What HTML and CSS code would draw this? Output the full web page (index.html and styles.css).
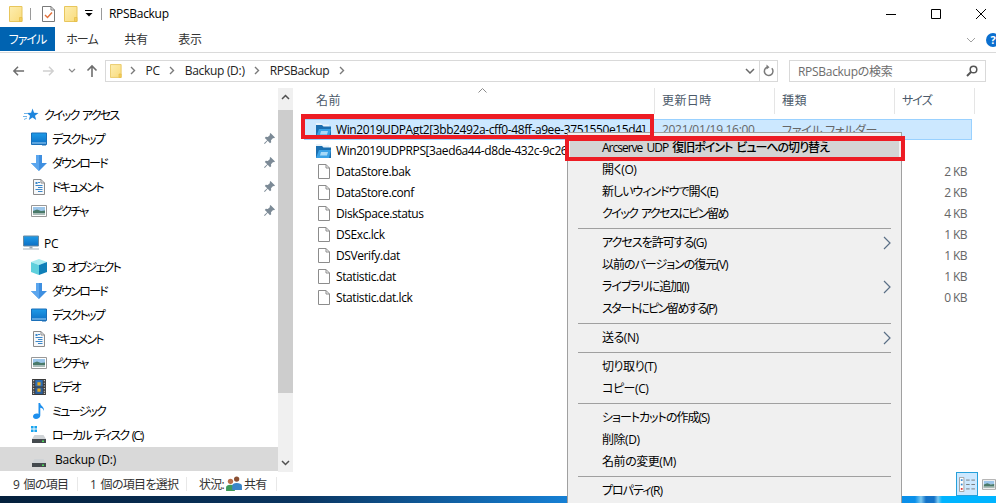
FILE: index.html
```html
<!DOCTYPE html>
<html lang="ja">
<head>
<meta charset="utf-8">
<title>RPSBackup</title>
<link rel="stylesheet" href="styles.css">
</head>
<body>
<svg class="defs" width="0" height="0" aria-hidden="true">
  <defs>
    <linearGradient id="gy" x1="0" y1="0" x2="1" y2="1"><stop offset="0" stop-color="#fdeeb0"/><stop offset="1" stop-color="#f9db7c"/></linearGradient>
    <linearGradient id="gb" x1="0" y1="0" x2="0" y2="1"><stop offset="0" stop-color="#1e9be8"/><stop offset="1" stop-color="#0d6fc4"/></linearGradient>
    <symbol id="folder" viewBox="0 0 14 16"><path d="M.5.5h12.500v15H.5z" fill="url(#gy)" stroke="#e8c65c"/><path d="M10.500 11.500H13v4h-2.500z" fill="#f4cf5e" stroke="#e3bb45" stroke-width=".7"/></symbol>
    <symbol id="check" viewBox="0 0 13 16"><path d="M.5.500h8.500l3.500 3.500v11.500H.5z" fill="#fff" stroke="#7a7a7a"/><path d="M9 .5V4h3.500" fill="none" stroke="#7a7a7a"/><path d="M3 9l2.500 2.500L10 6.500" fill="none" stroke="#e2703a" stroke-width="1.400"/></symbol>
    <symbol id="star" viewBox="0 0 16 16"><path d="M9.500 1.500l1.600 4.300 4.400.2-3.500 2.700 1.200 4.300-3.700-2.500L5.800 13l1.200-4.300L3.800 6l4.300-.200z" fill="#1f86dd"/><path d="M1 6.500h3M0 9.500h4M1 12.500l3-1.500" stroke="#6eb3e8" fill="none"/></symbol>
    <symbol id="desk" viewBox="0 0 16 13"><path d="M.5.500h15v11.500H.5z" fill="url(#gb)" stroke="#1a6fb8"/><path d="M1 10.500h14" stroke="#a8d4f4"/><path d="M11 12.500h4" stroke="#1a6fb8"/></symbol>
    <symbol id="dl" viewBox="0 0 16 16"><path d="M5 0h6v8h5l-8 8-8-8h5z" fill="#3f8fe0"/><path d="M5 0h3v16l-8-8h5z" fill="#5ba6ee"/></symbol>
    <symbol id="doc" viewBox="0 0 12 16"><path d="M.5.500h7.500l3.500 3.500v11.500H.5z" fill="#f6f8fa" stroke="#8b8b8b"/><path d="M8 .5V4h3.500" fill="none" stroke="#8b8b8b"/><path d="M5 3.500h2M2.500 6.500h7M5 8.500h4.500M2.500 10.500h7M5 12.500h4.500" stroke="#3b87c9"/><path d="M2.500 3h2v2h-2z" fill="#3b87c9"/></symbol>
    <symbol id="pic" viewBox="0 0 16 12"><path d="M.5.500h15v11H.5z" fill="#fff" stroke="#989898"/><path d="M2 2h12v4H2z" fill="#9cc6ea"/><path d="M2 6l4-1.500 4 1.500 4-.500V10H2z" fill="#4a7a6a"/><path d="M2 8h12v2H2z" fill="#a9bcb8"/></symbol>
    <symbol id="pc" viewBox="0 0 16 15"><path d="M.5.500h15v10H.5z" fill="url(#gb)" stroke="#6a8aa0"/><path d="M6.500 11h3v2h-3z" fill="#9aa8b2"/><path d="M0 13.500h16" stroke="#a8b4bc"/></symbol>
    <symbol id="cube" viewBox="0 0 16 16"><path d="M8 0l8 3-8 3-8-3z" fill="#a8ecf0"/><path d="M0 3l8 3v10l-8-3z" fill="#5fd0dc"/><path d="M16 3L8 6v10l8-3z" fill="#0f7fb8"/></symbol>
    <symbol id="film" viewBox="0 0 13 15"><path d="M0 0h13v15H0z" fill="#3a3a3a"/><path d="M3 1h7v6H3z" fill="#2f6fb5"/><path d="M3 8h7v6H3z" fill="#2a5f9e"/><path d="M5 3h3v3H5zM5 9h3v3H5z" fill="#e4a820"/><path d="M1 1.500h1M1 4h1M1 6.500h1M1 9h1M1 11.500h1M1 13.500h1M11 1.500h1M11 4h1M11 6.500h1M11 9h1M11 11.500h1M11 13.500h1" stroke="#ddd"/></symbol>
    <symbol id="music" viewBox="0 0 12 16"><path d="M5.500 0h1.600c.3 3 4.600 3.800 3.900 8-.7-2.200-2.500-3-3.700-3.200V12.500C7.300 14.700 5 16 3 16 1.300 16 0 15 0 13.600c0-1.700 1.800-3 3.700-3 .7 0 1.300.1 1.800.4z" fill="#1e90ee"/></symbol>
    <symbol id="win" viewBox="0 0 6 6"><path d="M0 0h2.600v2.600H0zM3.400 0H6v2.600H3.400zM0 3.400h2.600V6H0zM3.400 3.400H6V6H3.400z" fill="#19a4ee"/></symbol>
    <symbol id="drive" viewBox="0 0 14 8"><path d="M2.500 0h9L14 4H0z" fill="#cfd3d6"/><path d="M0 4h14v4H0z" fill="#444a4e"/><path d="M10 5.500h2v1.500h-2z" fill="#4ed65a"/></symbol>
    <symbol id="bfolder" viewBox="0 0 15 14"><path d="M0 0h5l1.500 1.500H13V4H0z" fill="#eaf3fa"/><path d="M0 2h6l1.500 1.500H15V14H0z" fill="#1b6fb0"/><path d="M3 6h12l-2 8H0z" fill="#3aa2e6"/><path d="M5 8h7l-1 3.500H4z" fill="#a6d9f7"/></symbol>
    <symbol id="file" viewBox="0 0 12 15"><path d="M.5.500h7.500l3.500 3.500v10.500H.5z" fill="#fff" stroke="#8c8c8c"/><path d="M8 .5V4h3.500" fill="none" stroke="#8c8c8c"/></symbol>
    <symbol id="pin" viewBox="0 0 11 11"><path d="M6.500 0L11 4.500l-1 .8-.9-.3L7 7.200l.2 2L6 10.200 3.700 7.800 .8 11 0 10.200 3.200 7.300.8 5l1-1.200 2 .2 2.200-2.100-.3-.9z" fill="#7c8a96"/></symbol>
    <symbol id="people" viewBox="0 0 18 17"><circle cx="5" cy="6" r="3" fill="#b9704a"/><path d="M0 17v-4c0-2 2-3 5-3s5 1 5 3v4z" fill="#3f9a5a"/><circle cx="12" cy="3.500" r="3" fill="#8a4f32"/><path d="M7 16v-5c0-2 2-3 5-3s6 1 6 3v5z" fill="#3a86c8"/></symbol>
    <symbol id="chev" viewBox="0 0 8 14"><path d="M1 1l6 6-6 6" fill="none" stroke="#5a6f86" stroke-width="1.200"/></symbol>
    <symbol id="crumb" viewBox="0 0 6 9"><path d="M1 1l3.500 3.500L1 8" fill="none" stroke="#7a7a7a" stroke-width="1.400"/></symbol>
  </defs>
</svg>

<div class="window">
  <header class="titlebar">
    <svg class="ico-title first"><use href="#folder"/></svg>
    <span class="tsep"></span>
    <svg class="ico-check"><use href="#check"/></svg>
    <svg class="ico-title"><use href="#folder"/></svg>
    <svg class="qat" viewBox="0 0 8 7"><path d="M0 .5h7.500" stroke="#000" fill="none"/><path d="M.5 3h7L4 6.500z" fill="#000"/></svg>
    <span class="tsep sep2"></span>
    <span class="title">RPSBackup</span>
    <div class="winctl">
      <svg viewBox="0 0 10 10"><path d="M0 5.500h10" stroke="#000" fill="none"/></svg>
      <svg viewBox="0 0 10 10"><path d="M.5.500h9v9h-9z" stroke="#000" fill="none"/></svg>
      <svg viewBox="0 0 10 10"><path d="M0 0l10 10M10 0L0 10" stroke="#000" fill="none"/></svg>
    </div>
  </header>

  <nav class="tabs">
    <span class="tab active kana">ファイル</span>
    <span class="tab kana">ホーム</span>
    <span class="tab">共有</span>
    <span class="tab">表示</span>
    <svg class="rib-chev" viewBox="0 0 10 6"><path d="M1 1l4 4 4-4" fill="none" stroke="#a0a0a0"/></svg>
    <span class="help">?</span>
  </nav>

  <div class="addressrow">
    <svg class="navbtn" viewBox="0 0 14 12"><path d="M13 6H2M6.500 1.500L2 6l4.500 4.500" fill="none" stroke="#6e6e6e" stroke-width="1.600"/></svg>
    <svg class="navbtn fwd" viewBox="0 0 14 12"><path d="M1 6h11M7.500 1.500L12 6l-4.500 4.500" fill="none" stroke="#d0d0d0" stroke-width="1.600"/></svg>
    <svg class="navbtn drop" viewBox="0 0 8 5"><path d="M1 1l3 3 3-3" fill="none" stroke="#8a8a8a" stroke-width="1.200"/></svg>
    <svg class="navbtn up" viewBox="0 0 12 13"><path d="M6 13V2M1.500 6.500L6 2l4.500 4.500" fill="none" stroke="#6e6e6e" stroke-width="1.600"/></svg>
    <div class="address">
      <svg class="addr-folder"><use href="#folder"/></svg>
      <svg class="crumb"><use href="#crumb"/></svg><span class="crumbtext">PC</span>
      <svg class="crumb"><use href="#crumb"/></svg><span class="crumbtext">Backup (D:)</span>
      <svg class="crumb"><use href="#crumb"/></svg><span class="crumbtext">RPSBackup</span>
      <svg class="crumb"><use href="#crumb"/></svg>
      <span class="addr-fill"></span>
      <svg class="addr-drop" viewBox="0 0 10 6"><path d="M1 1l4 4 4-4" fill="none" stroke="#6a6a6a" stroke-width="1.500"/></svg>
      <span class="addr-refresh"><svg viewBox="0 0 11 13"><path d="M8.800 4.200A4.300 4.300 0 1 1 4 3.200" fill="none" stroke="#7a7a7a" stroke-width="1.500"/><path d="M3.500 .5l3 2.700-3 2.300z" fill="#7a7a7a"/></svg></span>
    </div>
    <div class="search">
      <span>RPSBackupの検索</span>
      <svg viewBox="0 0 12 12"><circle cx="7.500" cy="4.500" r="3.300" fill="none" stroke="#555" stroke-width="1.500"/><path d="M5 7L1 11" stroke="#555" stroke-width="2"/></svg>
    </div>
  </div>

  <main class="main">
    <aside class="nav">
      <div class="tree">
        <div class="item top"><svg class="ic ic16"><use href="#star"/></svg>クイック アクセス</div>
        <div class="item"><svg class="ic ic16"><use href="#desk"/></svg>デスクトップ<svg class="pin"><use href="#pin"/></svg></div>
        <div class="item"><svg class="ic ic16"><use href="#dl"/></svg>ダウンロード<svg class="pin"><use href="#pin"/></svg></div>
        <div class="item"><svg class="ic ic16"><use href="#doc"/></svg>ドキュメント<svg class="pin"><use href="#pin"/></svg></div>
        <div class="item"><svg class="ic ic16"><use href="#pic"/></svg>ピクチャ<svg class="pin"><use href="#pin"/></svg></div>
        <div class="item top gap latin"><svg class="ic ic16"><use href="#pc"/></svg>PC</div>
        <div class="item"><svg class="ic ic16"><use href="#cube"/></svg>3D オブジェクト</div>
        <div class="item"><svg class="ic ic16"><use href="#dl"/></svg>ダウンロード</div>
        <div class="item"><svg class="ic ic16"><use href="#desk"/></svg>デスクトップ</div>
        <div class="item"><svg class="ic ic16"><use href="#doc"/></svg>ドキュメント</div>
        <div class="item"><svg class="ic ic16"><use href="#pic"/></svg>ピクチャ</div>
        <div class="item"><svg class="ic ic16"><use href="#film"/></svg>ビデオ</div>
        <div class="item"><svg class="ic ic16"><use href="#music"/></svg>ミュージック</div>
        <div class="item"><span class="ic drivewin"><svg class="w"><use href="#win"/></svg><svg class="d"><use href="#drive"/></svg></span>ローカル ディスク (C:)</div>
        <div class="item current latin"><span class="ic drivewin"><svg class="d"><use href="#drive"/></svg></span>Backup (D:)</div>
      </div>
      <div class="scrollbar">
        <svg class="sb-arrow" viewBox="0 0 9 6"><path d="M1 5l3.500-3.500L8 5" fill="none" stroke="#505050" stroke-width="1.500"/></svg>
        <span class="thumb"></span>
        <span class="sb-fill"></span>
        <svg class="sb-arrow" viewBox="0 0 9 6"><path d="M1 1l3.500 3.500L8 1" fill="none" stroke="#505050" stroke-width="1.500"/></svg>
      </div>
    </aside>

    <section class="files">
      <div class="head">
        <span class="hcell name">名前</span>
        <span class="hcell">更新日時</span>
        <span class="hcell">種類</span>
        <span class="hcell kana">サイズ</span>
        <svg class="sort" viewBox="0 0 9 5"><path d="M.5 4.500L4.500.5l4 4" fill="none" stroke="#8a8a8a"/></svg>
      </div>
      <div class="row selected"><span class="n"><svg class="fi bf"><use href="#bfolder"/></svg>Win2019UDPAgt2[3bb2492a-cff0-48ff-a9ee-3751550e15d4]</span><span class="d">2021/01/19 16:00</span><span class="t">ファイル フォルダー</span><span class="s"></span></div>
      <div class="row"><span class="n"><svg class="fi bf"><use href="#bfolder"/></svg>Win2019UDPRPS[3aed6a44-d8de-432c-9c26-000000000000]</span><span class="d"></span><span class="t"></span><span class="s"></span></div>
      <div class="row"><span class="n"><svg class="fi"><use href="#file"/></svg>DataStore.bak</span><span class="d"></span><span class="t"></span><span class="s">2 KB</span></div>
      <div class="row"><span class="n"><svg class="fi"><use href="#file"/></svg>DataStore.conf</span><span class="d"></span><span class="t"></span><span class="s">2 KB</span></div>
      <div class="row"><span class="n"><svg class="fi"><use href="#file"/></svg>DiskSpace.status</span><span class="d"></span><span class="t"></span><span class="s">4 KB</span></div>
      <div class="row"><span class="n"><svg class="fi"><use href="#file"/></svg>DSExc.lck</span><span class="d"></span><span class="t"></span><span class="s">1 KB</span></div>
      <div class="row"><span class="n"><svg class="fi"><use href="#file"/></svg>DSVerify.dat</span><span class="d"></span><span class="t"></span><span class="s">1 KB</span></div>
      <div class="row"><span class="n"><svg class="fi"><use href="#file"/></svg>Statistic.dat</span><span class="d"></span><span class="t"></span><span class="s">1 KB</span></div>
      <div class="row"><span class="n"><svg class="fi"><use href="#file"/></svg>Statistic.dat.lck</span><span class="d"></span><span class="t"></span><span class="s">0 KB</span></div>
    </section>
  </main>

  <footer class="status">
    <span class="st one">9 個の項目</span>
    <span class="st two">1 個の項目を選択</span>
    <span class="st three">状況: <svg class="people"><use href="#people"/></svg> 共有</span>
    <span class="views">
      <span class="view on"><svg viewBox="0 0 18 17"><path d="M.5 .5h5v16h-5z" fill="#fff" stroke="#9a9a9a"/><path d="M2 2.500h2v2H2z" fill="#3a8ad0"/><path d="M2 7.500h2v2H2z" fill="#3a8ad0"/><path d="M2 12.500h2v2H2z" fill="#e03030"/><path d="M8 3.500h4M14 3.500h4M8 8.500h4M14 8.500h4M8 13.500h4M14 13.500h4" stroke="#707070"/></svg></span>
      <svg class="view-pic"><use href="#pic"/></svg>
    </span>
  </footer>
  <div class="taskbar"></div>

  <div class="menu">
    <div class="mi strong">Arcserve UDP 復旧ポイント ビューへの切り替え</div>
    <div class="mi">開く(O)</div>
    <div class="mi t1">新しいウィンドウで開く(E)</div>
    <div class="mi t2">クイック アクセスにピン留め</div>
    <div class="msep"></div>
    <div class="mi t1">アクセスを許可する(G)<svg class="more"><use href="#chev"/></svg></div>
    <div class="mi t1">以前のバージョンの復元(V)</div>
    <div class="mi t1">ライブラリに追加(I)<svg class="more"><use href="#chev"/></svg></div>
    <div class="mi t2">スタートにピン留めする(P)</div>
    <div class="msep"></div>
    <div class="mi">送る(N)<svg class="more"><use href="#chev"/></svg></div>
    <div class="msep"></div>
    <div class="mi">切り取り(T)</div>
    <div class="mi">コピー(C)</div>
    <div class="msep"></div>
    <div class="mi t1">ショートカットの作成(S)</div>
    <div class="mi">削除(D)</div>
    <div class="mi">名前の変更(M)</div>
    <div class="msep"></div>
    <div class="mi t1">プロパティ(R)</div>
  </div>

  <div class="mark mark-file"></div>
  <div class="mark mark-menu"></div>
</div>
</body>
</html>
```
FILE: styles.css
```css
* { box-sizing: border-box; }
html, body { margin: 0; padding: 0; height: 100%; background: #fff; }
.defs { position: absolute; }
svg { display: block; flex: none; }

.window {
  position: relative;
  width: 996px;
  height: 503px;
  overflow: hidden;
  display: flex;
  flex-direction: column;
  font-family: "Open Sans", "Noto Sans CJK JP", sans-serif;
  font-size: 12px;
  color: #000;
  font-feature-settings: "palt";
  letter-spacing: -0.3px;
}

/* title bar */
.titlebar { height: 27px; display: flex; align-items: center; padding-left: 9px; flex: none; }
.ico-title { width: 14px; height: 16px; }
.tsep { width: 1px; height: 12px; background: #9a9a9a; margin: 0 11px 0 7px; }
.ico-check { width: 13px; height: 16px; margin-right: 9px; }
.qat { width: 8px; height: 7px; margin-left: 7px; }
.sep2 { margin: 0 7px 0 8px; }
.winctl { margin-left: auto; display: flex; align-items: center; gap: 35px; padding-right: 10px; }
.winctl svg { width: 10px; height: 10px; }

/* ribbon tabs */
.tabs { height: 26px; display: flex; align-items: flex-start; border-bottom: 1px solid #dadada; flex: none; position: relative; }
.tab { height: 24px; line-height: 24px; padding-top: 1px; width: 54px; text-align: center; color: #333; }
.tab.active { width: 55px; background: #0063b1; color: #fff; }
.tab.kana { letter-spacing: -1px; }
.rib-chev { width: 10px; height: 6px; margin: 10px 0 0 auto; }
.help { width: 14px; height: 14px; border-radius: 50%; background: #0b6fcf; color: #fff; font-weight: 700; font-size: 11px; line-height: 14px; text-align: center; margin: 6px -4px 0 10px; }

/* address row */
.addressrow { height: 35px; display: flex; align-items: center; padding-left: 12px; flex: none; }
.navbtn { width: 13px; height: 12px; }
.fwd { margin-left: 17px; }
.drop { width: 8px; height: 5px; margin-left: 13px; }
.up { width: 12px; height: 13px; margin-left: 10px; }
.address { height: 22px; width: 673px; margin-left: 7px; border: 1px solid #d9d9d9; display: flex; align-items: center; padding-left: 4px; color: #222; }
.addr-folder { width: 12px; height: 16px; margin-right: 8px; }
.crumb { width: 6px; height: 9px; }
.crumbtext { margin: 0 9.500px; }
.addr-fill { flex: 1; }
.addr-drop { width: 10px; height: 6px; margin-right: 4px; }
.addr-refresh { width: 18px; height: 20px; border-left: 1px solid #d9d9d9; display: flex; align-items: center; justify-content: center; }
.addr-refresh svg { width: 11px; height: 13px; }
.search { height: 22px; width: 197px; margin-left: 11px; margin-right: -1px; border: 1px solid #d9d9d9; display: flex; align-items: center; justify-content: space-between; padding: 0 7px 0 8px; color: #6d6d6d; flex: none; }
.search svg { width: 12px; height: 12px; }

/* main split */
.main { height: 384px; display: flex; flex: none; }
.nav { width: 293px; display: flex; flex: none; }
.tree { width: 278px; padding-top: 15px; }
.item { height: 24px; display: flex; align-items: center; padding-left: 31px; position: relative; white-space: nowrap; letter-spacing: -1.75px; word-spacing: 2px; }
.item.top { padding-left: 23px; }
.item.gap { margin-top: 8px; }
.item.latin { letter-spacing: -0.2px; word-spacing: 0; }
.item.current { background: #d9d9d9; }
.ic { margin-right: 5px; }
.ic16 { width: 16px; height: 16px; }
.drivewin { width: 16px; height: 20px; position: relative; display: block; }
.drivewin .w { position: absolute; left: 0; top: 1px; width: 6px; height: 6px; }
.drivewin .d { position: absolute; left: 1px; top: 10px; width: 14px; height: 8px; }
.current .drivewin { margin-right: 8px; }
.pin { width: 11px; height: 11px; position: absolute; left: 264px; top: 6px; }
.scrollbar { width: 15px; background: #f0f0f0; display: flex; flex-direction: column; align-items: center; }
.sb-arrow { width: 9px; height: 6px; margin: 6px 0; }
.thumb { width: 15px; height: 283px; margin-top: 4px; background: #cdcdcd; }
.sb-fill { flex: 1; }

/* file list */
.files { flex: 1; padding-left: 11px; position: relative; }
.head { height: 25px; display: grid; grid-template-columns: 351px 120px 120px 80px; color: #4c5a6a; position: relative; letter-spacing: .4px; }
.hcell { border-right: 1px solid #e5e5e5; padding-left: 7px; line-height: 26px; }
.hcell.name { padding-left: 12px; }
.hcell.kana { letter-spacing: -1px; }
.sort { position: absolute; left: 174px; top: 0; width: 9px; height: 5px; }
.row { height: 21px; display: grid; grid-template-columns: 351px 120px 120px 72px; width: 668px; align-items: center; white-space: nowrap; border: 1px solid transparent; }
.head + .row { margin-top: 6px; }
.row .n { display: flex; align-items: center; padding-left: 11px; overflow: hidden; letter-spacing: -0.4px; }
.row .d, .row .t { padding-left: 6px; color: #666; }
.row .s { text-align: right; color: #666; padding-right: 1px; letter-spacing: -0.6px; }
.row.selected { background: #cce8ff; border-color: #99d1ff; }
.fi { width: 12px; height: 15px; margin: 0 6px 0 2px; }
.fi.bf { width: 15px; height: 14px; margin: 0 5px 0 0; }

/* status bar */
.status { height: 24px; display: flex; align-items: center; padding: 0 0 0 13px; color: #333; flex: none; letter-spacing: -0.7px; word-spacing: 2px; }
.st { white-space: nowrap; display: flex; align-items: center; gap: 2px; height: 14px; padding-bottom: 1px; border-right: 1px solid #e8e8e8; }
.one { width: 65px; }
.two { margin-left: 12px; width: 97px; }
.three { margin-left: 12px; width: 78px; }
.people { width: 16px; height: 15px; }
.views { margin-left: auto; display: flex; align-items: center; gap: 4px; }
.view { width: 22px; height: 24px; display: flex; align-items: center; justify-content: center; }
.view.on { background: #cce8ff; border: 1px solid #26a0da; }
.view svg { width: 16px; height: 15px; }
.view-pic { width: 14px; height: 11px; }
.taskbar { flex: 1; background: linear-gradient(90deg, #04203c 0, #0a3560 300px, #1681d6 570px, #0a90ea 915px, #7cc8f0 921px, #1473c8 926px, #1473c8 934px, #7cc8f0 938px, #00b4ff 942px); }

/* context menu */
.menu { position: absolute; left: 567px; top: 132px; width: 335px; height: 380px; background: #f0f0f0; border: 1px solid #a0a0a0; padding: 4px 10px 0 10px; }
.mi { height: 22px; line-height: 22px; padding-left: 24px; position: relative; white-space: nowrap; letter-spacing: -0.45px; }
.mi.t1 { letter-spacing: -1px; }
.mi.t2 { letter-spacing: -1.55px; word-spacing: 2px; }
.mi.strong { font-weight: 500; background: #d4d4d4; margin: 0 -8px; padding-left: 32px; letter-spacing: -1px; word-spacing: 2px; }
.msep { height: 7px; display: flex; align-items: center; }
.msep::after { content: ""; display: block; width: 100%; height: 1px; background: #a0a0a0; }
.more { position: absolute; right: 0; top: 4px; width: 8px; height: 14px; }

/* red annotations over the screenshot */
.mark { position: absolute; border-style: solid; border-color: #ed1c24; pointer-events: none; }
.mark-file { left: 301px; top: 114px; width: 353px; height: 25px; border-width: 5px 4px 4px 4px; }
.mark-menu { left: 565px; top: 136px; width: 340px; height: 25px; border-width: 5px 4px 4px 4px; }
```
